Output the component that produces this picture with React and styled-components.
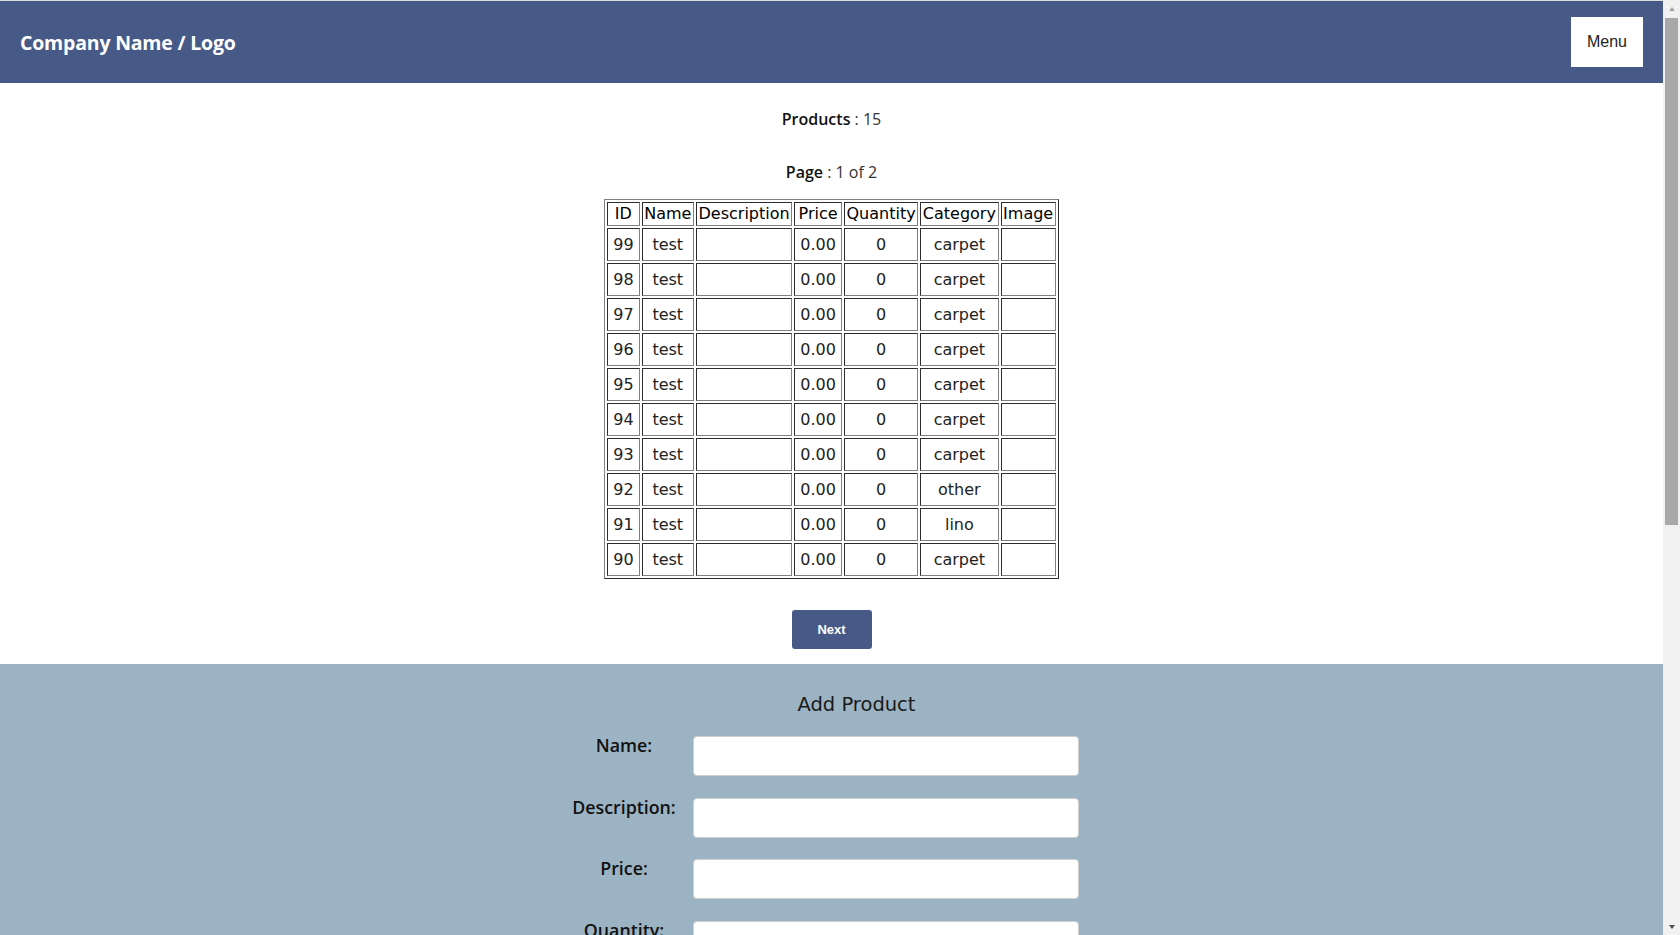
import React from 'react';
import styled, { createGlobalStyle } from 'styled-components';

const GlobalStyle = createGlobalStyle`
  body {
    margin: 0;
    font-family: "DejaVu Sans", sans-serif;
    color: #222;
  }
`;

const Page = styled.div`
  margin-right: 17px;
`;

const Header = styled.header`
  display: flex;
  justify-content: space-between;
  align-items: center;
  height: 82px;
  padding: 0 20px;
  border-top: 1px solid #dcdcdc;
  background: #475a87;
`;

const Logo = styled.div`
  font-family: "Open Sans", sans-serif;
  font-weight: 700;
  font-size: 19.5px;
  color: #ffffff;
  letter-spacing: -0.2px;
`;

const MenuButton = styled.button`
  width: 72px;
  height: 50px;
  border: none;
  background: #ffffff;
  font-family: "Liberation Sans", Arial, sans-serif;
  font-size: 16px;
  color: #222;
`;

const Main = styled.main`
  display: flex;
  flex-direction: column;
  align-items: center;
  padding-top: 26px;
`;

const Stat = styled.p`
  margin: ${(p) => p.gap}px 0 0;
  font-family: "Open Sans", sans-serif;
  font-size: 16px;
  line-height: 20px;
  color: #111;
`;

const StatLabel = styled.span`
  font-weight: 600;
`;

const StatValue = styled.span`
  font-weight: 400;
  color: #333;
`;

const Table = styled.table`
  margin-top: 17px;
  border: 1px outset #808080;
  border-spacing: 2px;
  font-size: 16px;
`;

const Th = styled.th`
  padding: 1px 1.6px;
  border: 1px inset #808080;
  font-weight: 400;
  line-height: 20px;
  color: #000;
`;

const Td = styled.td`
  padding: 6px 5px;
  border: 1px inset #808080;
  line-height: 19px;
  text-align: center;
  color: #222;
`;

const NextButton = styled.button`
  width: 80px;
  height: 39px;
  margin: 31px 0 15px;
  border: none;
  border-radius: 3px;
  background: #475a87;
  color: #ffffff;
  font-family: "Liberation Sans", Arial, sans-serif;
  font-weight: 700;
  font-size: 13px;
`;

const FormSection = styled.section`
  min-height: 1000px;
  padding-top: 29px;
  box-sizing: border-box;
  background: #9cb3c3;
`;

const FormWrap = styled.div`
  width: 579px;
  margin: 0 auto;
  padding-left: 50px;
`;

const FormTitle = styled.h2`
  margin: 0 0 19px;
  font-size: 19.5px;
  font-weight: 400;
  line-height: 24px;
  text-align: center;
  color: #1a1a1a;
`;

const FormGrid = styled.form`
  display: grid;
  grid-template-columns: 114px 386px;
  column-gap: 12px;
  row-gap: 21.5px;
`;

const Label = styled.label`
  font-family: "Open Sans", sans-serif;
  font-weight: 600;
  font-size: 17.8px;
  line-height: 19px;
  text-align: center;
  color: #111;
`;

const Input = styled.input`
  height: 40px;
  box-sizing: border-box;
  border: 1px solid #cfcfcf;
  border-radius: 4px;
  background: #ffffff;
  font-size: 15px;
  padding: 0 10px;
`;

const SubmitButton = styled(NextButton)`
  grid-column: 2;
  margin: 8px 0 0;
`;

const ScrollBar = styled.div`
  position: fixed;
  top: 0;
  right: 0;
  width: 17px;
  height: 100vh;
  display: flex;
  flex-direction: column;
  align-items: center;
  background: #f1f1f1;
`;

const ScrollArrow = styled.div`
  flex: none;
  height: 17px;
  width: 17px;
  display: flex;
  align-items: center;
  justify-content: center;

  &::before {
    content: '';
    border-left: 3.5px solid transparent;
    border-right: 3.5px solid transparent;
    ${(p) =>
      p.down
        ? 'border-top: 4px solid #505050;'
        : 'border-bottom: 4px solid #a3a3a3;'}
  }
`;

const ScrollTrack = styled.div`
  flex: 1;
  align-self: stretch;
  display: flex;
  justify-content: center;
  padding-top: 1px;
`;

const ScrollThumb = styled.div`
  width: 13px;
  height: 507px;
  background: #a8a8a8;
`;

const products = [
  { id: 99, category: 'carpet' },
  { id: 98, category: 'carpet' },
  { id: 97, category: 'carpet' },
  { id: 96, category: 'carpet' },
  { id: 95, category: 'carpet' },
  { id: 94, category: 'carpet' },
  { id: 93, category: 'carpet' },
  { id: 92, category: 'other' },
  { id: 91, category: 'lino' },
  { id: 90, category: 'carpet' },
];

const columns = ['ID', 'Name', 'Description', 'Price', 'Quantity', 'Category', 'Image'];
const fields = ['Name', 'Description', 'Price', 'Quantity', 'Category', 'Image'];

const App = () => (
  <>
    <GlobalStyle />
    <Page>
      <Header>
        <Logo>Company Name / Logo</Logo>
        <MenuButton>Menu</MenuButton>
      </Header>
      <Main>
        <Stat gap={0}>
          <StatLabel>Products</StatLabel>
          <StatValue> : 15</StatValue>
        </Stat>
        <Stat gap={33}>
          <StatLabel>Page</StatLabel>
          <StatValue> : 1 of 2</StatValue>
        </Stat>
        <Table>
          <thead>
            <tr>
              {columns.map((c) => (
                <Th key={c}>{c}</Th>
              ))}
            </tr>
          </thead>
          <tbody>
            {products.map((p) => (
              <tr key={p.id}>
                <Td>{p.id}</Td>
                <Td>test</Td>
                <Td />
                <Td>0.00</Td>
                <Td>0</Td>
                <Td>{p.category}</Td>
                <Td />
              </tr>
            ))}
          </tbody>
        </Table>
        <NextButton>Next</NextButton>
      </Main>
      <FormSection>
        <FormWrap>
          <FormTitle>Add Product</FormTitle>
          <FormGrid onSubmit={(e) => e.preventDefault()}>
            {fields.map((f) => (
              <React.Fragment key={f}>
                <Label htmlFor={`field-${f}`}>{f}:</Label>
                <Input id={`field-${f}`} type="text" />
              </React.Fragment>
            ))}
            <SubmitButton type="submit">Add</SubmitButton>
          </FormGrid>
        </FormWrap>
      </FormSection>
    </Page>
    <ScrollBar aria-hidden="true">
      <ScrollArrow />
      <ScrollTrack>
        <ScrollThumb />
      </ScrollTrack>
      <ScrollArrow down />
    </ScrollBar>
  </>
);

export default App;
